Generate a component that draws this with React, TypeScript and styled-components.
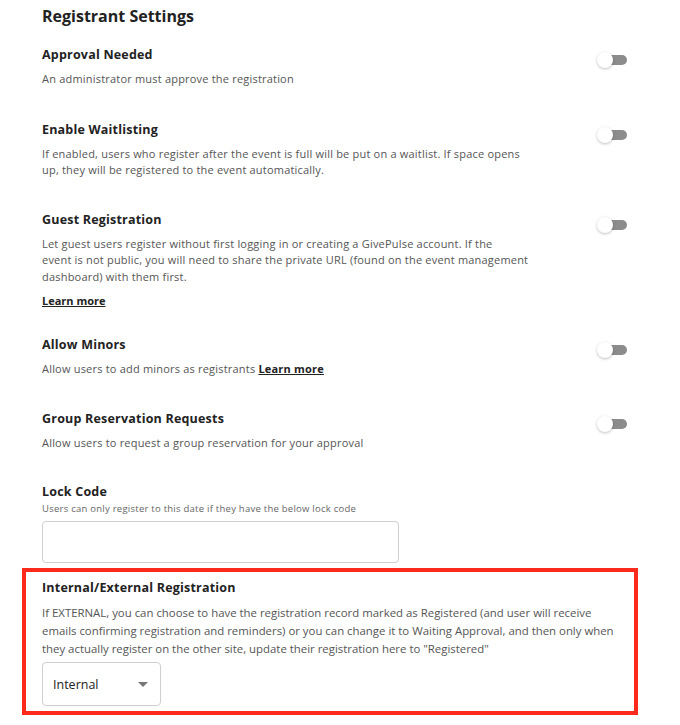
import React from "react";
import styled, { createGlobalStyle } from "styled-components";

const Global = createGlobalStyle`
  html, body { margin: 0; padding: 0; background: #fff; }
  body { font-family: "Open Sans", "Noto Sans", sans-serif; color: #222; }
  * { box-sizing: border-box; }
`;

const Page = styled.div`
  width: 680px;
  padding: 6px 0 0 42px;
`;

const Heading = styled.h2`
  margin: 0 0 21px;
  font-size: 16px;
  line-height: 20px;
  font-weight: 700;
  color: #222;
`;

const Row = styled.div<{ $gap?: number }>`
  display: flex;
  justify-content: space-between;
  align-items: flex-start;
  width: 585px;
  margin-bottom: ${(p) => (p.$gap ?? 33)}px;
`;

const Text = styled.div`
  width: 494px;
`;

const Title = styled.div`
  font-size: 12.5px;
  line-height: 16px;
  font-weight: 700;
  letter-spacing: 0.2px;
  color: #222;
  margin-bottom: 8px;
`;

const Desc = styled.div`
  font-size: 11px;
  line-height: 16.5px;
  letter-spacing: 0.2px;
  color: #555;
`;

const More = styled.a`
  font-weight: 700;
  color: #222;
  text-decoration: underline;
  font-size: 11px;
`;

const MoreLine = styled.div`
  margin-top: 8px;
  line-height: 16px;
  font-size: 11px;
`;

const Switch = styled.div`
  position: relative;
  width: 30px;
  height: 14px;
  margin-top: 6px;
  flex-shrink: 0;
`;

const Track = styled.div`
  position: absolute;
  left: 10px;
  top: 2px;
  width: 20px;
  height: 10px;
  border-radius: 5px;
  background: #8c8c8c;
`;

const Knob = styled.div`
  position: absolute;
  left: 0;
  top: -1px;
  width: 16px;
  height: 16px;
  border-radius: 50%;
  background: #fff;
  box-shadow: 0 1px 3px rgba(0, 0, 0, 0.25);
`;

const SmallDesc = styled.div`
  font-size: 9.5px;
  line-height: 14px;
  letter-spacing: 0.25px;
  color: #666;
  margin-top: -6px;
  margin-bottom: 5px;
`;

const Input = styled.div`
  width: 357px;
  height: 42px;
  border: 1px solid #cfcfcf;
  border-radius: 4px;
`;

const Highlight = styled.div`
  margin: 5px 0 0 -20px;
  width: 616px;
  border: 4px solid #fb2a1c;
  padding: 8px 8px 5px 16px;
`;

const HlDesc = styled.div`
  font-size: 11.4px;
  line-height: 18px;
  color: #555;
  margin-top: 5px;
`;

const Select = styled.div`
  display: flex;
  align-items: center;
  justify-content: space-between;
  margin-top: 4px;
  width: 119px;
  height: 44px;
  border: 1px solid #cfcfcf;
  border-radius: 4px;
  padding: 0 12px 0 10px;
  font-size: 12.5px;
  color: #222;
`;

const Caret = styled.span`
  width: 0;
  height: 0;
  border-left: 5px solid transparent;
  border-right: 5px solid transparent;
  border-top: 5px solid #777;
`;

const Toggle = () => (
  <Switch>
    <Track />
    <Knob />
  </Switch>
);

export default function App() {
  return (
    <Page>
      <Global />
      <Heading>Registrant Settings</Heading>
      <Row $gap={34}>
        <Text>
          <Title>Approval Needed</Title>
          <Desc>An administrator must approve the registration</Desc>
        </Text>
        <Toggle />
      </Row>
      <Row>
        <Text>
          <Title>Enable Waitlisting</Title>
          <Desc>
            If enabled, users who register after the event is full will be put on a waitlist. If space opens
            up, they will be registered to the event automatically.
          </Desc>
        </Text>
        <Toggle />
      </Row>
      <Row $gap={28}>
        <Text>
          <Title>Guest Registration</Title>
          <Desc>
            Let guest users register without first logging in or creating a GivePulse account. If the
            <br />
            event is not public, you will need to share the private URL (found on the event management
            dashboard) with them first.
          </Desc>
          <MoreLine>
            <More>Learn more</More>
          </MoreLine>
        </Text>
        <Toggle />
      </Row>
      <Row>
        <Text>
          <Title>Allow Minors</Title>
          <Desc>
            Allow users to add minors as registrants <More>Learn more</More>
          </Desc>
        </Text>
        <Toggle />
      </Row>
      <Row>
        <Text>
          <Title>Group Reservation Requests</Title>
          <Desc>Allow users to request a group reservation for your approval</Desc>
        </Text>
        <Toggle />
      </Row>
      <Title>Lock Code</Title>
      <SmallDesc>Users can only register to this date if they have the below lock code</SmallDesc>
      <Input />
      <Highlight>
        <Title>Internal/External Registration</Title>
        <HlDesc>
          If EXTERNAL, you can choose to have the registration record marked as Registered (and user will receive
          emails confirming registration and reminders) or you can change it to Waiting Approval, and then only when
          they actually register on the other site, update their registration here to "Registered"
        </HlDesc>
        <Select>
          Internal
          <Caret />
        </Select>
      </Highlight>
    </Page>
  );
}
